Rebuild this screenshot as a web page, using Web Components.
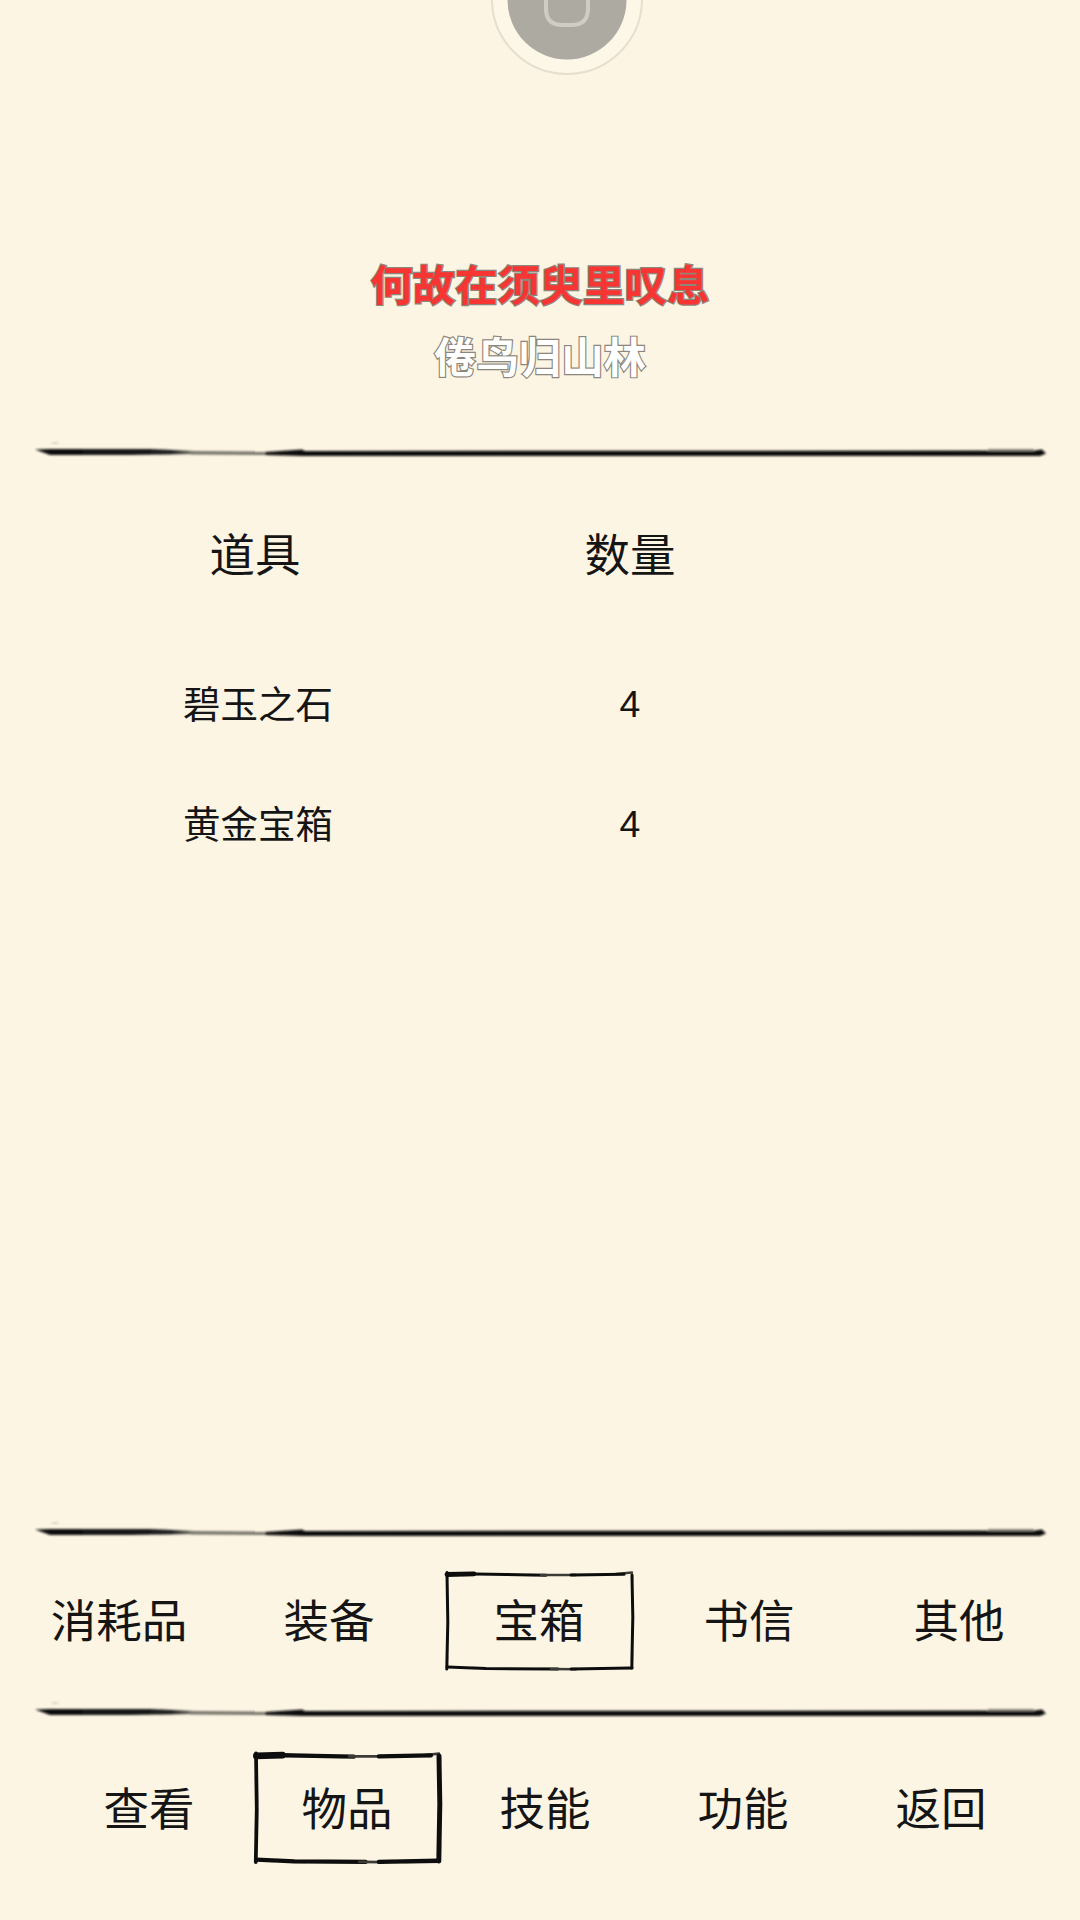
<!DOCTYPE html>
<html lang="zh">
<head>
<meta charset="utf-8">
<title>物品</title>
<style>
    html, body { margin: 0; background: #fdf5e4; }
    body {
        font-family: "Noto Sans CJK SC", "Liberation Sans", sans-serif;
        color: #151515;
    }
    #page {
        width: 1080px;
        height: 1920px;
        box-sizing: border-box;
        padding-bottom: 57px;
        display: flex;
        flex-direction: column;
        overflow: hidden;
        background: #fdf5e4;
    }
    .grow { flex: 1; }
</style>
</head>
<body>
<div id="page">
    <menu-knob></menu-knob>
    <title-block heading="何故在须臾里叹息" sub="倦鸟归山林"></title-block>
    <brush-line style="margin-top: 60px;"></brush-line>
    <item-table>
        <item-row head name="道具" count="数量"></item-row>
        <item-row name="碧玉之石" count="4"></item-row>
        <item-row name="黄金宝箱" count="4"></item-row>
    </item-table>
    <div class="grow"></div>
    <brush-line></brush-line>
    <tab-bar style="--cell: 210px; --box-w: 187px; --box-h: 98px; --left: 14px; --above: 28px; --lift: 7px;">
        <tab-item>消耗品</tab-item>
        <tab-item>装备</tab-item>
        <tab-item active>宝箱</tab-item>
        <tab-item>书信</tab-item>
        <tab-item>其他</tab-item>
    </tab-bar>
    <brush-line style="margin-top: 30px;"></brush-line>
    <tab-bar style="--cell: 198px; --box-w: 185px; --box-h: 110px; --left: 50px; --above: 29px; --lift: 5px;">
        <tab-item>查看</tab-item>
        <tab-item active heavy>物品</tab-item>
        <tab-item>技能</tab-item>
        <tab-item>功能</tab-item>
        <tab-item>返回</tab-item>
    </tab-bar>
</div>

<script>
// round grey button cut off by the top of the screen
class MenuKnob extends HTMLElement {
    constructor() {
        super();
        this.attachShadow({ mode: 'open' });
        this.shadowRoot.innerHTML = `
            <style>
                :host { display: block; height: 75px; padding-left: 54px; }
                svg { display: block; margin: 0 auto; }
            </style>
            <svg width="160" height="75" viewBox="0 0 160 75">
                <circle cx="80" cy="-1" r="75" fill="#fdf7e7" stroke="#e4dfcf" stroke-width="2"/>
                <circle cx="80" cy="0" r="59.5" fill="#adaaa1"/>
                <path d="M59 -6 V9 Q59 25 76 25 H84 Q101 25 101 9 V-6" fill="none" stroke="#cfccc4" stroke-width="4"/>
            </svg>
        `;
    }
}
customElements.define('menu-knob', MenuKnob);

// red title with the white line under it
class TitleBlock extends HTMLElement {
    constructor() {
        super();
        this.attachShadow({ mode: 'open' });
        this.shadowRoot.innerHTML = `
            <style>
                :host {
                    display: flex;
                    flex-direction: column;
                    align-items: center;
                    gap: 22px;
                    padding-top: 183px;
                    font-size: 42.4px;
                    line-height: 50px;
                }
                div { -webkit-text-stroke: 2.4px #8c877c; paint-order: stroke fill; }
                .heading { color: #f73633; font-weight: 700; }
                .sub { color: #fff; font-weight: 700; }
            </style>
            <div class="heading"></div>
            <div class="sub"></div>
        `;
    }

    connectedCallback() {
        this.shadowRoot.querySelector('.heading').textContent = this.getAttribute('heading');
        this.shadowRoot.querySelector('.sub').textContent = this.getAttribute('sub');
    }
}
customElements.define('title-block', TitleBlock);

// ink stroke used as a divider
class BrushLine extends HTMLElement {
    constructor() {
        super();
        this.attachShadow({ mode: 'open' });
        this.shadowRoot.innerHTML = `
            <style>
                :host { display: block; height: 24px; padding-left: 30px; }
                svg { display: block; }
            </style>
            <svg width="1020" height="24" viewBox="0 0 1020 24">
                <defs>
                    <filter id="soft" x="-2%" y="-50%" width="104%" height="200%"><feGaussianBlur stdDeviation="0.9"/></filter>
                    <linearGradient id="fade" x1="0" x2="1" y1="0" y2="0">
                        <stop offset="0" stop-color="#0c0c0c"/>
                        <stop offset="0.85" stop-color="#1c1c1c"/>
                        <stop offset="1" stop-color="#77746b"/>
                    </linearGradient>
                </defs>
                <g filter="url(#soft)">
                    <ellipse cx="25" cy="3" rx="4" ry="0.8" fill="#c9c4b6"/>
                    <path d="M5 9.5 L20 9 L120 9 L165 11 L165 14 L100 15 L20 15 Z" fill="url(#fade)"/>
                    <path d="M160 11 L240 11.5 L240 15 L160 14.5 Z" fill="#77746b"/>
                    <path d="M235 12 L272 9.5 L275 11 L1004 10.5 L1012 9.5 L1016 13.5 L1010 16 L700 16 L272 16 L235 15 Z" fill="#0f0f0f"/>
                    <path d="M958 9 L1004 9 L1004 11 L958 11 Z" fill="#8b887f"/>
                </g>
            </svg>
        `;
    }
}
customElements.define('brush-line', BrushLine);

class ItemTable extends HTMLElement {
    constructor() {
        super();
        this.attachShadow({ mode: 'open' });
        this.shadowRoot.innerHTML = `
            <style>
                :host { display: block; padding-top: 59px; }
            </style>
            <slot></slot>
        `;
    }
}
customElements.define('item-table', ItemTable);

// one line of the table, head attribute makes it the header
class ItemRow extends HTMLElement {
    constructor() {
        super();
        this.attachShadow({ mode: 'open' });
        this.shadowRoot.innerHTML = `
            <style>
                :host {
                    display: grid;
                    grid-template-columns: 516px 228px;
                    height: 120px;
                    align-items: center;
                    justify-items: center;
                    font-size: 37.5px;
                    line-height: 50px;
                }
                :host([head]) {
                    font-size: 45.5px;
                    height: 60px;
                    margin-bottom: 61px;
                }
                .name { padding-bottom: 5px; }
                :host([head]) .name { margin-right: 6px; padding-bottom: 2px; }
                .count { font-family: "Liberation Sans", "Noto Sans CJK SC", sans-serif; }
                :host([head]) .count { font-family: inherit; padding-bottom: 2px; }
            </style>
            <div class="name"></div>
            <div class="count"></div>
        `;
    }

    connectedCallback() {
        this.shadowRoot.querySelector('.name').textContent = this.getAttribute('name');
        this.shadowRoot.querySelector('.count').textContent = this.getAttribute('count');
    }
}
customElements.define('item-row', ItemRow);

class TabBar extends HTMLElement {
    constructor() {
        super();
        this.attachShadow({ mode: 'open' });
        this.shadowRoot.innerHTML = `
            <style>
                :host {
                    display: flex;
                    padding-left: var(--left);
                    margin-top: var(--above);
                    height: var(--box-h);
                }
            </style>
            <slot></slot>
        `;
    }
}
customElements.define('tab-bar', TabBar);

// tab, active one gets a hand drawn frame around it
class TabItem extends HTMLElement {
    constructor() {
        super();
        this.attachShadow({ mode: 'open' });
        this.shadowRoot.innerHTML = `
            <style>
                :host {
                    display: flex;
                    position: relative;
                    box-sizing: border-box;
                    width: var(--cell);
                    padding-bottom: var(--lift);
                    align-items: center;
                    justify-content: center;
                    font-size: 45.5px;
                    line-height: 60px;
                }
                svg {
                    display: none;
                    position: absolute;
                    left: calc((var(--cell) - var(--box-w)) / 2);
                    top: 0;
                    width: var(--box-w);
                    height: var(--box-h);
                    overflow: visible;
                }
                :host([active]) svg { display: block; }
                path { fill: none; stroke: #0c0c0c; stroke-linecap: round; }
                .edge { stroke-width: 3; }
                .thick { stroke-width: 4.8; }
                .faint { stroke: #3d3b36; stroke-width: 2.4; }
                .side { stroke-width: 3; }
                :host([heavy]) .edge { stroke-width: 3.8; }
                :host([heavy]) .thick { stroke-width: 6; }
                :host([heavy]) .side { stroke-width: 5; }
            </style>
            <svg viewBox="0 0 187 98" preserveAspectRatio="none">
                <defs><filter id="soft" x="-5%" y="-8%" width="110%" height="116%"><feGaussianBlur stdDeviation="0.6"/></filter></defs>
                <g filter="url(#soft)">
                    <path class="thick" d="M1 2.5 L28 1.8"/>
                    <path class="edge" d="M28 2 L60 2.5 L100 3.2"/>
                    <path class="faint" d="M95 3 L130 3"/>
                    <path class="faint" d="M170 2 L186 0.5"/>
                    <path class="edge" d="M125 3 L178 2.2"/>
                    <path class="edge" d="M1 0.5 L1.8 50 L0.8 97"/>
                    <path class="side" d="M186 3 L186.8 45 L185.8 96"/>
                    <path class="edge" d="M1 95 L40 96.5 L112 97"/>
                    <path class="faint" d="M105 97 L130 97.3"/>
                    <path class="edge" d="M125 97 L186 96"/>
                </g>
            </svg>
            <slot></slot>
        `;
    }
}
customElements.define('tab-item', TabItem);
</script>
</body>
</html>
